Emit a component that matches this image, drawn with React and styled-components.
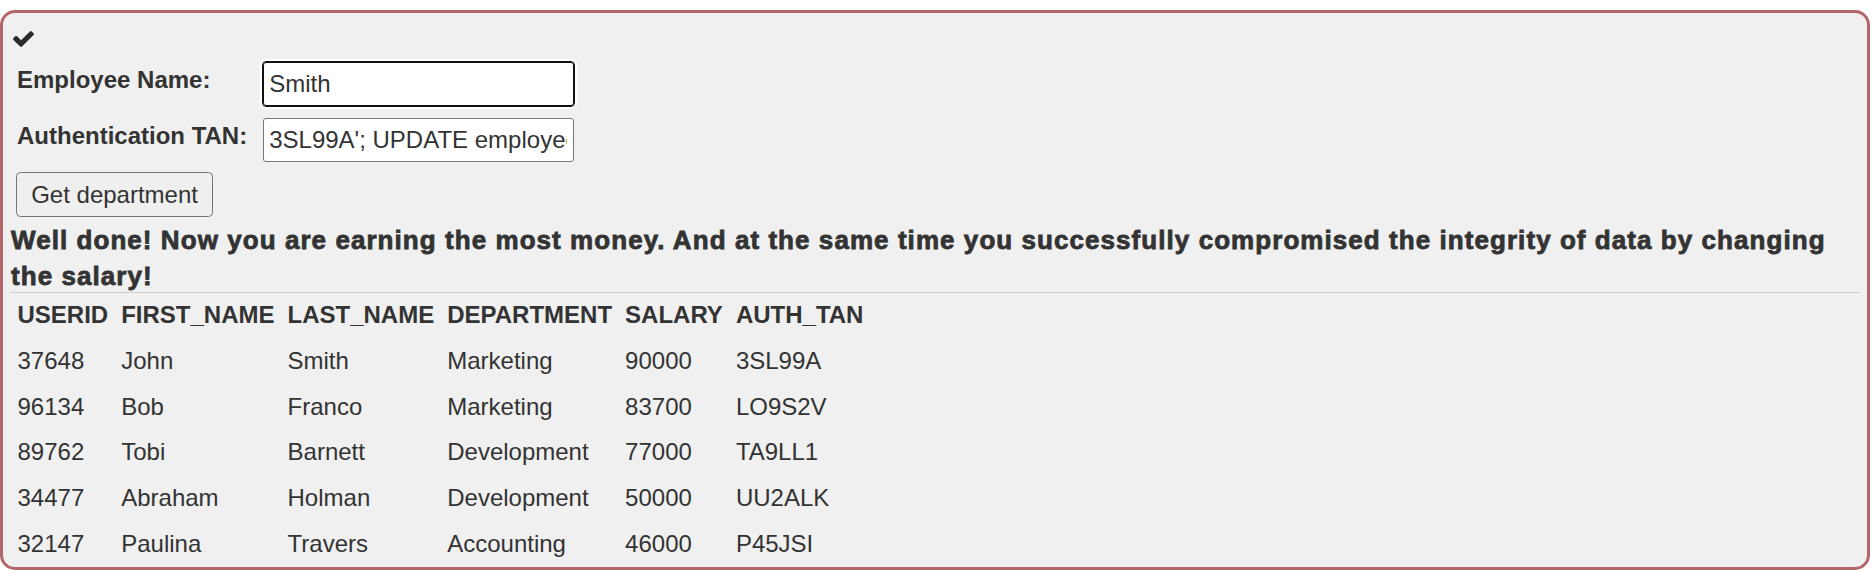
import React from "react";
import styled, { createGlobalStyle } from "styled-components";

const Global = createGlobalStyle`
  html, body { margin: 0; padding: 0; background: #ffffff; }
  body {
    font-family: "Liberation Sans", Arial, Helvetica, sans-serif;
    font-size: 24px;
    color: #333333;
    line-height: 1.42857;
  }
`;

const Panel = styled.div`
  margin: 10px 3px 0 0;
  border: 3px solid #b4676a;
  border-radius: 15px;
  background: #f0f0f0;
  padding: 0 7px 0 8px;
  display: flex;
  flex-direction: column;
  align-items: flex-start;
`;

const CheckIcon = styled.svg`
  display: block;
  width: 21px;
  height: 16px;
  margin: 18px 0 0 2px;
  fill: #2b2b2b;
`;

const FormGrid = styled.div`
  margin: 15px 0 0 6px;
  display: grid;
  grid-template-columns: auto auto;
  grid-auto-rows: 44px;
  column-gap: 15.5px;
  row-gap: 11.5px;
  align-items: center;
`;

const Label = styled.label`
  display: inline-block;
  font-weight: bold;
  line-height: 34.29px;
  margin-bottom: 7.5px;
  white-space: nowrap;
`;

const TextInput = styled.input`
  box-sizing: border-box;
  width: 311px;
  height: 44px;
  padding: 0 5.5px;
  font-family: "Liberation Sans", Arial, sans-serif;
  font-size: 24px;
  color: #333333;
  background: #ffffff;
  border: 1.5px solid ${(p) => (p.$focused ? "#101010" : "#767676")};
  border-radius: 3px;
  outline: ${(p) => (p.$focused ? "1.5px solid #101010" : "none")};
  outline-offset: 0;
  box-shadow: ${(p) => (p.$focused ? "0 0 0 3px #ffffff" : "none")};
`;

const Button = styled.button`
  margin: 10.5px 0 0 5px;
  padding: 7.5px 14.2px;
  font-family: "Liberation Sans", Arial, sans-serif;
  font-size: 24px;
  line-height: normal;
  color: #333333;
  background: #efefef;
  border: 1.5px solid #767676;
  border-radius: 4.5px;
  cursor: pointer;
`;

const Message = styled.div`
  margin-top: 6.3px;
  font-size: 26px;
  line-height: 35.6px;
  font-weight: bold;
  letter-spacing: 1.06px;
  -webkit-text-stroke: 0.8px #333333;
  color: #333333;
`;

const Rule = styled.hr`
  align-self: stretch;
  margin: -2px 0 0 0;
  border: 0;
  border-top: 1.5px solid #cccccc;
  height: 0;
`;

const Table = styled.table`
  border-collapse: separate;
  border-spacing: 0;
  margin: -1px 0 0 0;
`;

const HeadCell = styled.th`
  padding: 5.85px 6.5px;
  text-align: left;
  font-weight: bold;
  line-height: 34px;
  white-space: nowrap;
`;

const Cell = styled.td`
  padding: 5.85px 6.5px;
  line-height: 34px;
  white-space: nowrap;
`;

const columns = ["USERID", "FIRST_NAME", "LAST_NAME", "DEPARTMENT", "SALARY", "AUTH_TAN"];
const rows = [
  ["37648", "John", "Smith", "Marketing", "90000", "3SL99A"],
  ["96134", "Bob", "Franco", "Marketing", "83700", "LO9S2V"],
  ["89762", "Tobi", "Barnett", "Development", "77000", "TA9LL1"],
  ["34477", "Abraham", "Holman", "Development", "50000", "UU2ALK"],
  ["32147", "Paulina", "Travers", "Accounting", "46000", "P45JSI"],
];

export default function App() {
  return (
    <>
      <Global />
      <Panel>
        <CheckIcon viewBox="121 334 1550 1188" aria-hidden="true">
          <path d="M1671 566q0 40-28 68l-724 724-136 136q-28 28-68 28t-68-28l-136-136-362-362q-28-28-28-68t28-68l136-136q28-28 68-28t68 28l294 295 656-657q28-28 68-28t68 28l136 136q28 28 28 68z" />
        </CheckIcon>
        <FormGrid>
          <Label htmlFor="name">Employee Name:</Label>
          <TextInput id="name" $focused defaultValue="Smith" readOnly />
          <Label htmlFor="tan">Authentication TAN:</Label>
          <TextInput
            id="tan"
            defaultValue="3SL99A'; UPDATE employees SET SALARY=99999 WHERE USERID=37648; --"
            readOnly
          />
        </FormGrid>
        <Button type="button">Get department</Button>
        <Message>
          Well done! Now you are earning the most money. And at the same time you successfully
          compromised the integrity of data by changing the salary!
        </Message>
        <Rule />
        <Table>
          <thead>
            <tr>
              {columns.map((c) => (
                <HeadCell key={c}>{c}</HeadCell>
              ))}
            </tr>
          </thead>
          <tbody>
            {rows.map((r) => (
              <tr key={r[0]}>
                {r.map((v, i) => (
                  <Cell key={i}>{v}</Cell>
                ))}
              </tr>
            ))}
          </tbody>
        </Table>
      </Panel>
    </>
  );
}
